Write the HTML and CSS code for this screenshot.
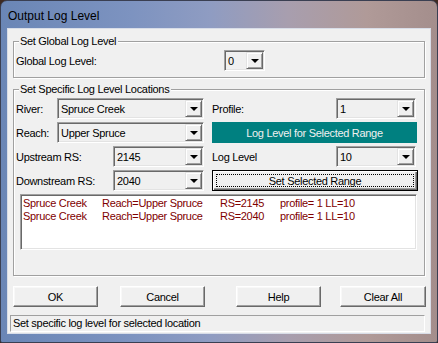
FILE: index.html
```html
<!DOCTYPE html>
<html>
<head>
<meta charset="utf-8">
<link rel="stylesheet" href="styles.css">
</head>
<body>
<div class="window">
  <div class="titlebar"><span class="title">Output Log Level</span></div>
  <div class="client">
    <div class="group group-global">
      <span class="legend">Set Global Log Level</span>
      <div class="global-row">
        <span class="label">Global Log Level:</span>
        <div class="combo combo-global"><span class="value">0</span><span class="drop"><i></i></span></div>
      </div>
    </div>

    <div class="group group-specific">
      <span class="legend">Set Specific Log Level Locations</span>
      <div class="spec-grid">
        <div class="row">
          <span class="label">River:</span>
          <div class="combo combo-wide"><span class="value">Spruce Creek</span><span class="drop"><i></i></span></div>
        </div>
        <div class="row">
          <span class="label">Profile:</span>
          <div class="combo combo-small"><span class="value">1</span><span class="drop"><i></i></span></div>
        </div>
        <div class="row">
          <span class="label">Reach:</span>
          <div class="combo combo-wide"><span class="value">Upper Spruce</span><span class="drop"><i></i></span></div>
        </div>
        <div class="teal">Log Level for Selected Range</div>
        <div class="row">
          <span class="label">Upstream RS:</span>
          <div class="combo combo-rs"><span class="value">2145</span><span class="drop"><i></i></span></div>
        </div>
        <div class="row">
          <span class="label">Log Level</span>
          <div class="combo combo-small"><span class="value">10</span><span class="drop"><i></i></span></div>
        </div>
        <div class="row">
          <span class="label">Downstream RS:</span>
          <div class="combo combo-rs"><span class="value">2040</span><span class="drop"><i></i></span></div>
        </div>
        <button class="btn btn-default"><span class="focus">Set Selected Range</span></button>
      </div>
      <div class="listbox">
        <div class="line"><span class="c1">Spruce Creek</span><span class="c2">Reach=Upper Spruce</span><span class="c3">RS=2145</span><span class="c4">profile= 1 LL=10</span></div>
        <div class="line"><span class="c1">Spruce Creek</span><span class="c2">Reach=Upper Spruce</span><span class="c3">RS=2040</span><span class="c4">profile= 1 LL=10</span></div>
      </div>
    </div>

    <div class="buttons">
      <button class="btn b-ok">OK</button>
      <button class="btn b-cancel">Cancel</button>
      <button class="btn b-help">Help</button>
      <button class="btn b-clear">Clear All</button>
    </div>

    <div class="status">Set specific log level for selected location</div>
  </div>
</div>
</body>
</html>
```

FILE: styles.css
```css
html, body {
  margin: 0;
  padding: 0;
}
body {
  width: 438px;
  height: 343px;
  overflow: hidden;
  background: #3e2a22;
  font-family: "Liberation Sans", Arial, sans-serif;
  font-size: 11px;
  letter-spacing: -0.3px;
  color: #000;
}
.window {
  box-sizing: border-box;
  width: 438px;
  height: 343px;
  border-radius: 7px 7px 2px 2px;
  border: 1px solid #3a3f52;
  background: linear-gradient(to right, #6a86b6 0%, #7d93c0 30%, #8f9cc2 48%, #a89eae 66%, #b09a98 84%, #a48e8c 100%);
  padding: 0 7px 9px 7px;
  display: flex;
  flex-direction: column;
}
.titlebar {
  height: 28px;
  display: flex;
  align-items: center;
}
.title {
  font-size: 12px;
  letter-spacing: 0;
  color: #000;
  margin-top: 2px;
}
.client {
  flex: 1;
  background: #f0f0f0;
  box-shadow: 0 0 0 1px #d8dde8;
  display: flex;
  flex-direction: column;
}
.group {
  position: relative;
  margin: 0 5px 0 5px;
  border: 1px solid #a0a0a0;
  box-shadow: inset 1px 1px #fff, 1px 1px #fff;
}
.legend {
  position: absolute;
  top: -7px;
  left: 5px;
  padding: 0 2px 0 1px;
  line-height: 13px;
  background: #f0f0f0;
  white-space: nowrap;
}
.group-global {
  margin-top: 12px;
  padding: 8px 6px 6px 2px;
}
.global-row {
  display: grid;
  grid-template-columns: 208px 41px;
  align-items: center;
  height: 21px;
}
.label {
  white-space: nowrap;
}
.combo {
  position: relative;
  box-sizing: border-box;
  height: 21px;
  border: 1px solid;
  border-color: #a0a0a0 #fff #fff #a0a0a0;
  box-shadow: inset 1px 1px #696969, inset -1px -1px #e3e3e3;
  background: #f0f0f0;
  display: flex;
  align-items: center;
}
.combo .value {
  padding-left: 3px;
  flex: 1;
  white-space: nowrap;
}
.drop {
  box-sizing: border-box;
  width: 17px;
  height: 17px;
  margin-right: 1px;
  border: 1px solid;
  border-color: #e3e3e3 #696969 #696969 #e3e3e3;
  box-shadow: inset 1px 1px #fff, inset -1px -1px #a0a0a0;
  background: #f0f0f0;
  display: flex;
  align-items: center;
  justify-content: center;
}
.drop i {
  width: 0;
  height: 0;
  border-left: 4px solid transparent;
  border-right: 4px solid transparent;
  border-top: 4px solid #000;
  margin-top: 1px;
}
.group-specific {
  margin-top: 11px;
  padding: 8px 6px 25px 2px;
}
.spec-grid {
  display: grid;
  grid-template-columns: 188px 206px;
  grid-auto-rows: 21px;
  column-gap: 8px;
  row-gap: 3px;
}
.row {
  display: flex;
  align-items: center;
  justify-content: space-between;
}
.combo-wide { width: 147px; }
.combo-rs { width: 91px; }
.combo-small { width: 80px; margin-right: 2px; }
.combo-global { width: 41px; }
.teal {
  background: #008080;
  color: #f0f0f0;
  display: flex;
  align-items: center;
  justify-content: center;
  margin-right: 1px;
  font-size: 11px;
}
.btn {
  box-sizing: border-box;
  font: inherit;
  letter-spacing: inherit;
  color: #000;
  background: #f0f0f0;
  border: 1px solid;
  border-color: #fff #696969 #696969 #fff;
  box-shadow: inset -1px -1px #a0a0a0, inset 1px 1px #f8f8f8;
  padding: 0;
  height: 21px;
  margin: 0;
}
.btn-default {
  border: 1px solid #000;
  box-shadow: inset 1px 1px #fff, inset -1px -1px #696969, inset -2px -2px #a0a0a0;
  padding: 3px;
  display: flex;
}
.btn-default .focus {
  flex: 1;
  border: 1px dotted #000;
  display: flex;
  align-items: center;
  justify-content: center;
}
.listbox {
  box-sizing: border-box;
  margin: 3px 1px 0 4px;
  height: 56px;
  background: #fff;
  border: 1px solid;
  border-color: #a0a0a0 #fff #fff #a0a0a0;
  box-shadow: inset 1px 1px #696969, inset -1px -1px #e3e3e3;
  padding: 2px 0 0 2px;
  color: #800000;
}
.line {
  display: flex;
  line-height: 13px;
  white-space: nowrap;
}
.c1 { width: 79px; }
.c2 { width: 118px; }
.c3 { width: 60px; }
.buttons {
  display: flex;
  margin-top: 10px;
  padding-left: 5px;
}
.buttons .btn {
  width: 85px;
}
.b-cancel { margin-left: 22px; }
.b-help { margin-left: 31px; }
.buttons .b-clear { margin-left: 19px; width: 86px; }
.status {
  box-sizing: border-box;
  margin: 8px 5px 0 2px;
  height: 17px;
  border: 1px solid;
  border-color: #a0a0a0 #fff #fff #a0a0a0;
  padding-left: 2px;
  line-height: 15px;
  white-space: nowrap;
}
```
